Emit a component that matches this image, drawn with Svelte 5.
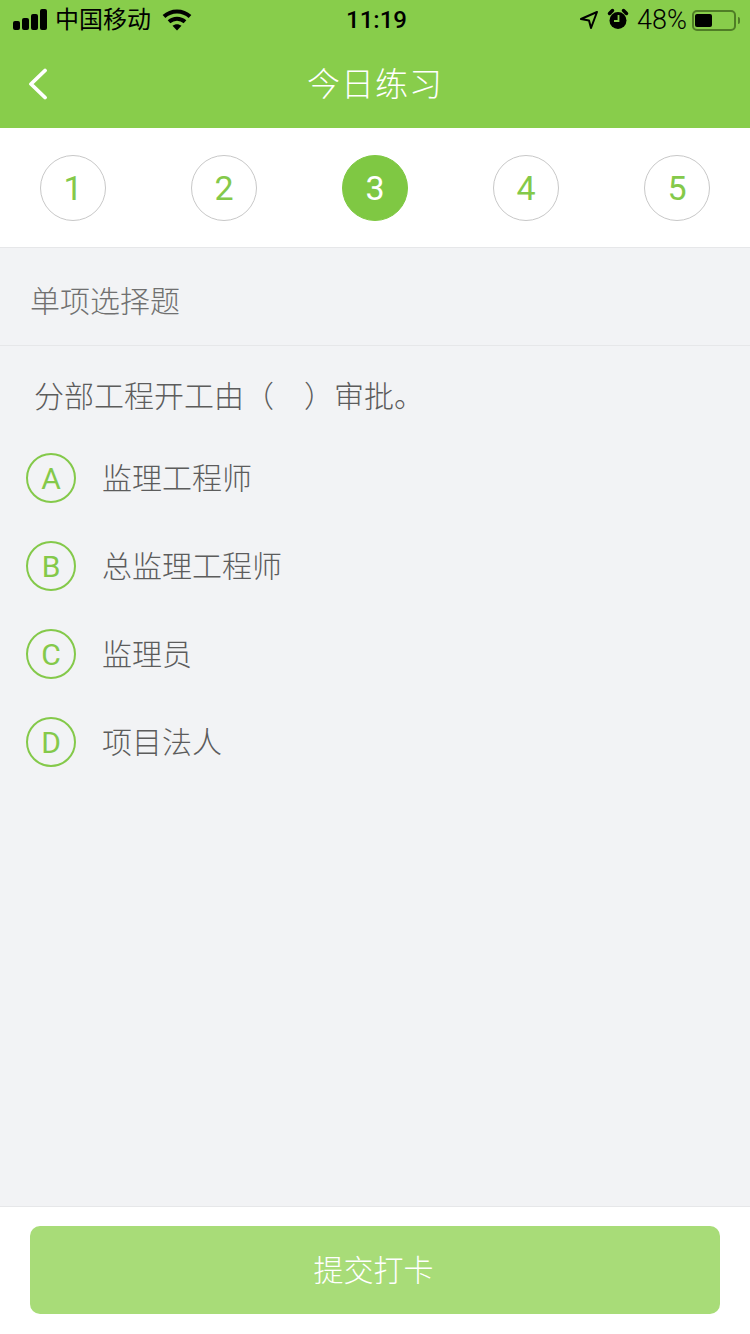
<script>
  const steps = [1, 2, 3, 4, 5];
  const active = 3;
  const options = [
    { key: 'A', text: '监理工程师' },
    { key: 'B', text: '总监理工程师' },
    { key: 'C', text: '监理员' },
    { key: 'D', text: '项目法人' }
  ];
</script>

<div class="page">
  <header class="head">
    <div class="status">
      <div class="left">
        <svg class="signal" width="34" height="22" viewBox="0 0 34 22" fill="#000">
          <rect x="0" y="12" width="7" height="9" rx="2"/>
          <rect x="9" y="9" width="7" height="12" rx="2"/>
          <rect x="18" y="5" width="7" height="16" rx="2"/>
          <rect x="27" y="0" width="7" height="21" rx="2"/>
        </svg>
        <span class="carrier">中国移动</span>
        <svg class="wifi" width="30" height="23" viewBox="0 0 30 23">
          <path d="M2 8.500C9.200 1.700 20.800 1.700 28 8.500" fill="none" stroke="#000" stroke-width="4"/>
          <path d="M7 13.800C11.600 9.700 18.400 9.700 23 13.800" fill="none" stroke="#000" stroke-width="4"/>
          <path d="M10.500 17.800C13 15.600 17 15.600 19.500 17.800L15 22.500Z" fill="#000"/>
        </svg>
      </div>
      <span class="time">11:19</span>
      <div class="right">
        <svg class="loc" width="20" height="20" viewBox="0 0 20 20" fill="none" stroke="#000" stroke-width="2" stroke-linejoin="round">
          <path d="M18 2L2 9L10 10.500L12 18Z"/>
        </svg>
        <svg class="alarm" width="22" height="22" viewBox="0 0 22 22">
          <circle cx="11" cy="12.500" r="8.500" fill="#000"/>
          <path d="M2.500 5.500L5.500 2.500" stroke="#000" stroke-width="3.500" stroke-linecap="round"/>
          <path d="M19.500 5.500L16.500 2.500" stroke="#000" stroke-width="3.500" stroke-linecap="round"/>
          <path d="M11.500 7V13H7" fill="none" stroke="#88cd4b" stroke-width="1.800"/>
        </svg>
        <span class="pct">48%</span>
        <div class="battery"><div class="cell"></div></div>
        <div class="nub"></div>
      </div>
    </div>
    <div class="nav">
      <svg class="back" width="20" height="32" viewBox="0 0 20 32" fill="none" stroke="#fff" stroke-width="3.800" stroke-linecap="round" stroke-linejoin="round">
        <path d="M17 2.500L3 16L17 29.500"/>
      </svg>
      <h1>今日练习</h1>
    </div>
  </header>

  <div class="steps">
    {#each steps as s}
      <div class="step" class:on={s === active}>{s}</div>
    {/each}
  </div>

  <div class="kind">单项选择题</div>

  <main class="body">
    <p class="question">分部工程开工由（　）审批。</p>
    <ul class="opts">
      {#each options as o}
        <li>
          <span class="badge">{o.key}</span>
          <span class="opt">{o.text}</span>
        </li>
      {/each}
    </ul>
  </main>

  <footer class="foot">
    <button class="submit">提交打卡</button>
  </footer>
</div>

<style>
  :global(body) { margin: 0; }
  .page {
    width: 750px;
    height: 1334px;
    display: flex;
    flex-direction: column;
    background: #f2f3f5;
    font-family: Roboto, "Noto Sans CJK SC", sans-serif;
    font-weight: 300;
    overflow: hidden;
  }
  .head { background: #88cd4b; height: 128px; flex: none; }
  .status {
    height: 40px;
    padding: 0 10px 0 13px;
    display: grid;
    grid-template-columns: 1fr auto 1fr;
    align-items: center;
    color: #000;
    font-size: 24px;
  }
  .left, .right { display: flex; align-items: center; }
  .right { justify-content: flex-end; }
  .signal { margin-top: -1px; }
  .carrier { margin-left: 8px; line-height: 40px; font-weight: 400; }
  .wifi { margin-left: 11px; margin-top: -1px; }
  .time { font-size: 24px; font-weight: 500; }
  .loc { margin-right: 8px; }
  .alarm { margin-right: 8px; margin-top: -2px; }
  .pct { font-size: 27px; margin-right: 5px; }
  .battery {
    width: 44px;
    height: 21px;
    box-sizing: border-box;
    border: 2px solid #4f7d26;
    border-radius: 5px;
    padding: 2px 3px 2px 1px;
    display: flex;
  }
  .cell { width: 17px; background: #000; border-radius: 2px; }
  .nub { width: 2px; height: 7px; background: #4f7d26; margin-left: 2px; border-radius: 0 2px 2px 0; }
  .nav {
    height: 88px;
    position: relative;
    display: flex;
    align-items: center;
    justify-content: center;
  }
  .back { position: absolute; left: 28px; top: 28px; }
  h1 {
    margin: -4px 0 0;
    color: #fff;
    font-size: 33px;
    font-weight: 300;
    letter-spacing: 1px;
  }
  .steps {
    flex: none;
    height: 120px;
    box-sizing: border-box;
    background: #fff;
    border-bottom: 1px solid #e6e7e9;
    padding: 27px 40px 0;
    display: flex;
    justify-content: space-between;
    align-items: flex-start;
  }
  .step {
    width: 66px;
    height: 66px;
    box-sizing: border-box;
    border: 1px solid #c8c8c8;
    border-radius: 50%;
    display: flex;
    align-items: center;
    justify-content: center;
    font-size: 34px;
    font-weight: 400;
    color: #84c94a;
  }
  .step.on { background: #7fc843; border-color: #7fc843; color: #fff; }
  .kind {
    flex: none;
    height: 98px;
    box-sizing: border-box;
    padding: 5px 0 0 30px;
    display: flex;
    align-items: center;
    border-bottom: 1px solid #e6e7e9;
    font-size: 30px;
    color: #707070;
  }
  .body { flex: 1; }
  .question {
    margin: 0;
    padding: 30px 0 0 34px;
    font-size: 30px;
    line-height: 42px;
    color: #5c5c5c;
  }
  .opts {
    list-style: none;
    margin: 0;
    padding: 14px 0 0 26px;
  }
  li {
    height: 88px;
    display: flex;
    align-items: center;
    gap: 26px;
    box-sizing: border-box;
  }
  .badge {
    width: 50px;
    height: 50px;
    margin-top: 4px;
    box-sizing: border-box;
    border: 2px solid #84c94a;
    border-radius: 50%;
    display: flex;
    align-items: center;
    justify-content: center;
    color: #84c94a;
    font-size: 30px;
    font-weight: 400;
  }
  .opt { font-size: 30px; color: #5c5c5c; }
  .foot {
    flex: none;
    height: 128px;
    box-sizing: border-box;
    background: #fff;
    border-top: 1px solid #e6e7e9;
    padding: 19px 30px 0;
  }
  .submit {
    width: 100%;
    height: 88px;
    border: none;
    border-radius: 10px;
    background: #a8dc78;
    color: #fff;
    font-family: inherit;
    font-weight: 300;
    font-size: 30px;
    padding: 0 3px 4px 0;
  }
</style>
